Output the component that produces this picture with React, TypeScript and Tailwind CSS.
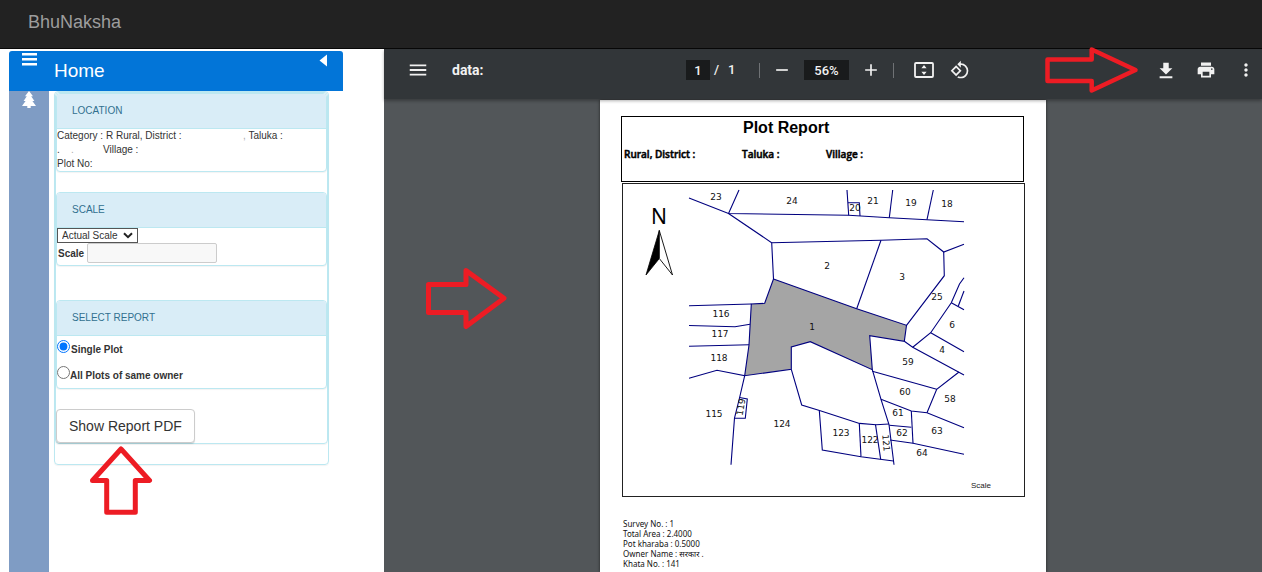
import type { ReactNode } from "react";
import {
  MdAdd,
  MdFileDownload,
  MdMenu,
  MdMoreVert,
  MdPrint,
  MdRemove,
  MdRotate90DegreesCcw,
} from "react-icons/md";

const boundaries = [
  "689,198 728.5,213.5 848.7,215.3 889.3,217.7 927,219.7 964,221.7",
  "739,190 728.5,213.5 771.7,242.7 773.5,279",
  "771.7,242.7 881,240.3 927,238.7 943.7,252 964,244.3",
  "943.7,252 944.3,275.7 906.5,325.3",
  "881,240.3 856.7,308.7",
  "847,190 848.7,215.3",
  "848,202.8 859.3,202.8 860,216",
  "892.7,190 889.3,217.7",
  "933.3,190 927,219.7",
  "964,277.7 959.5,284 951.3,302.7 930.7,332.7 912.7,347.3",
  "951.3,302.7 964,309.7",
  "964,291 958.3,306",
  "930.7,332.7 964,351.7",
  "904.3,341.3 912.7,347.3 964,375",
  "959,372 936.7,389.3 927,412.7",
  "872.3,371.3 936.7,389.3",
  "872.3,369.7 881,399.3 889,424.5 894,464.7",
  "881,399.3 911.3,411 927,412.7 964,427.7",
  "911.3,411 913,443.3",
  "889.3,425.3 911.3,427.3",
  "890,440 913,443.3 964,454.3",
  "889,424 876,424.7 859.5,423.4 819.5,410.5 801.7,405 791.3,369.3",
  "819.3,410.5 822.3,450 861,456.7 893.5,461",
  "859.3,423.5 861,456.7",
  "875.5,424.7 880.7,459.3",
  "689,305.7 751.3,304",
  "689,325.5 735,326.7 750,324.3",
  "689,346.3 749,344.8",
  "689,378.3 717,370.3 744.7,375.7 739.5,398 734.5,418 731,464.7",
  "739.5,397.5 747.3,399 745.3,418.3 734.5,418.3",
];

const plots: [string, number, number, number?][] = [
  ["23", 716, 197],
  ["24", 792, 201],
  ["20", 855, 208],
  ["21", 873, 201],
  ["19", 911, 203],
  ["18", 947, 204],
  ["2", 827, 266],
  ["3", 902, 277],
  ["25", 937, 297],
  ["6", 952, 325],
  ["4", 942, 350],
  ["59", 908, 362],
  ["1", 812, 327],
  ["116", 721, 314],
  ["117", 720, 334],
  ["118", 719, 358],
  ["115", 714, 414],
  ["119", 741, 407, -80],
  ["124", 782, 424],
  ["123", 841, 433],
  ["122", 870, 440],
  ["121", 886, 443, 85],
  ["60", 905, 392],
  ["58", 950, 399],
  ["61", 898, 413],
  ["62", 902, 433],
  ["63", 937, 431],
  ["64", 922, 453],
];

function PlotMap() {
  return (
    <svg viewBox="623 184 401 312" className="block w-full" role="img" aria-label="Plot map">
      <polygon
        points="773.5,279 856.7,308.7 906.5,325.3 904.3,341.3 869.7,335.7 872.3,369.7 810.3,341.7 791.3,347 791.3,369.3 744.7,375.7 749,345 751.3,304 764.7,303.3"
        fill="#a5a5a5"
        stroke="#00007f"
        strokeWidth="1.1"
      />
      <g fill="none" stroke="#00007f" strokeWidth="1.1">
        {boundaries.map((p) => (
          <polyline key={p} points={p} />
        ))}
      </g>
      <g className="font-['DejaVu_Sans',sans-serif] text-[9px]" fill="#111" textAnchor="middle">
        {plots.map(([label, x, y, turn]) => (
          <text key={label} x={x} y={y + 3} transform={turn ? `rotate(${turn} ${x} ${y})` : undefined}>
            {label}
          </text>
        ))}
      </g>
      <text x="659" y="224" textAnchor="middle" className="font-['Noto_Sans',sans-serif] text-[21px] font-normal">
        N
      </text>
      <path d="M659.3 230.5 L646 275 L659.3 258.5 Z" fill="#000" stroke="#000" strokeWidth="0.8" />
      <path d="M659.3 230.5 L672.5 275 L659.3 258.5 Z" fill="#fff" stroke="#000" strokeWidth="0.9" />
      <text x="971" y="488" fill="#222" className="font-['Liberation_Sans',sans-serif] text-[8px]">
        Scale
      </text>
    </svg>
  );
}

function Panel({ title, children }: { title: string; children: ReactNode }) {
  return (
    <section className="rounded-[4px] border border-[#bce8f1] bg-white shadow-[0_1px_1px_rgba(0,0,0,0.05)]">
      <h2 className="flex h-[35px] items-center rounded-t-[3px] border-b border-[#bce8f1] bg-[#d9edf7] pb-[2px] pl-[15px] text-[10px] text-[#31708f]">
        {title}
      </h2>
      {children}
    </section>
  );
}

function Sidebar() {
  return (
    <aside className="flex w-96 shrink-0 flex-col pt-[2px] pl-[9px] text-[10px] text-[#333]">
      <header className="flex h-10 w-[334px] rounded-t-[3px] bg-[#0275d8] text-white">
        <button aria-label="Toggle menu" className="flex w-10 justify-center pt-[2px]">
          <svg width="15" height="13" viewBox="0 0 15 13" fill="currentColor">
            <path d="M0 0h15v2.6H0zM0 5h15v2.6H0zM0 10h15v2.6H0z" />
          </svg>
        </button>
        <h1 className="grow pl-[5px] text-[19px] leading-10">Home</h1>
        <button aria-label="Collapse" className="flex w-10 justify-center pt-[3px]">
          <svg width="8" height="13" viewBox="0 0 8 13" fill="currentColor">
            <path d="M8 0.5v12L0.5 6.5z" />
          </svg>
        </button>
      </header>
      <div className="flex grow">
        <nav className="w-10 bg-[#7f9cc4] text-white">
          <a href="#layers" aria-label="Layers" className="flex justify-center">
            <svg width="14" height="17" viewBox="0 0 14 17" fill="currentColor">
              <path d="M7 0L11 5.2H9.2L12.4 10H10.4L14 15H8.7V17H5.3V15H0L3.6 10H1.6L4.8 5.2H3Z" />
            </svg>
          </a>
        </nav>
        <div className="w-[280px] pl-[5px]">
          <div className="rounded-[4px] border border-[#bce8f1] pb-[20px] shadow-[0_1px_1px_rgba(0,0,0,0.05)]">
            <form
              className="rounded-[4px] border border-[#bce8f1] shadow-[0_1px_1px_rgba(0,0,0,0.05)]"
              onSubmit={(e) => e.preventDefault()}
            >
              <Panel title="LOCATION">
                <div className="h-[42px] leading-[14px]">
                  <p className="flex">
                    <span className="w-[186px] whitespace-nowrap">Category : R Rural, District :</span>
                    <span>
                      <span className="text-[#aaa]">,</span> Taluka :
                    </span>
                  </p>
                  <p className="flex">
                    <span className="w-[14px]">.</span>
                    <span className="w-8 text-[#aaa]">.</span>
                    <span>Village :</span>
                  </p>
                  <p>Plot No:</p>
                </div>
              </Panel>
              <div className="mt-[20px]">
                <Panel title="SCALE">
                  <div className="flex h-[37px] flex-col items-start">
                    <div className="relative h-[15px]">
                      <select
                        aria-label="Scale type"
                        className="block h-[15px] w-[81px] appearance-none border border-[#555] bg-white pl-1 text-[10px] leading-[13px]"
                      >
                        <option>Actual Scale</option>
                      </select>
                      <svg
                        className="pointer-events-none absolute top-[4px] right-[5px]"
                        width="10"
                        height="7"
                        viewBox="0 0 10 7"
                        fill="none"
                        stroke="#222"
                        strokeWidth="2"
                      >
                        <path d="M1 1.2l4 4 4-4" />
                      </svg>
                    </div>
                    <div className="flex items-center">
                      <label htmlFor="scale" className="w-[30px] pl-px font-bold">
                        Scale
                      </label>
                      <input
                        id="scale"
                        disabled
                        className="h-5 w-[130px] rounded-[2px] border border-[#ccc] bg-[#f8f8f8] px-1"
                      />
                    </div>
                  </div>
                </Panel>
              </div>
              <div className="mt-[34px]">
                <Panel title="SELECT REPORT">
                  <div className="h-[52px] font-bold">
                    <div className="flex h-[26px]">
                      <input id="single" type="radio" name="report" defaultChecked className="mt-1 size-[13px]" />
                      <label htmlFor="single" className="pt-[6px] pl-px leading-[15px]">
                        Single Plot
                      </label>
                    </div>
                    <div className="flex h-[26px]">
                      <input id="all" type="radio" name="report" className="mt-1 size-[13px]" />
                      <label htmlFor="all" className="pt-[6px] leading-[15px]">
                        All Plots of same owner
                      </label>
                    </div>
                  </div>
                </Panel>
              </div>
              <div className="relative mt-[20px]">
                <button className="block h-[34px] rounded-[4px] border border-[#ccc] bg-white px-3 text-[14px] shadow-[0_1px_1px_rgba(0,0,0,0.15)]">
                  Show Report PDF
                </button>
                <svg
                  className="pointer-events-none absolute top-[36px] left-[34px]"
                  width="63"
                  height="70"
                  viewBox="90 445 63 70"
                  fill="none"
                  stroke="#ed1c24"
                  strokeWidth="5"
                  strokeLinejoin="round"
                  aria-hidden="true"
                >
                  <path d="M121 449L149.5 480.5H135.3V512.3H106.7V480.5H92.5Z" />
                </svg>
              </div>
            </form>
          </div>
        </div>
      </div>
    </aside>
  );
}

function Toolbar() {
  return (
    <div className="relative grid h-[50px] grid-cols-[1fr_auto_1fr] items-center bg-[#323639] pb-2 font-['Roboto',sans-serif] text-[#f1f1f1] shadow-[0_2px_3px_rgba(0,0,0,0.3)]">
      <div className="flex items-center gap-[23px] pl-[23px] text-[14px]">
        <button aria-label="Menu">
          <MdMenu size={22} />
        </button>
        <span className="font-bold">data:</span>
      </div>
      <div className="flex items-center pl-[10px] text-[13px] font-medium">
        <input
          aria-label="Page number"
          defaultValue="1"
          className="h-5 w-6 bg-[#191b1c] text-center"
        />
        <span className="w-[18px] pl-1">/</span>
        <span className="w-[31px]">1</span>
        <span className="h-[15px] w-px bg-[#6f7275]" />
        <button aria-label="Zoom out" className="ml-[12px]">
          <MdRemove size={20} />
        </button>
        <input
          aria-label="Zoom level"
          defaultValue="56%"
          className="ml-[12px] h-5 w-[45px] bg-[#191b1c] text-center"
        />
        <button aria-label="Zoom in" className="ml-[12px]">
          <MdAdd size={20} />
        </button>
        <span className="ml-[12px] h-[15px] w-px bg-[#6f7275]" />
        <button aria-label="Fit to page" className="ml-[20px]">
          <svg width="20" height="16" viewBox="0 0 20 16" fill="currentColor">
            <rect x="1" y="1" width="18" height="14" rx="1" fill="none" stroke="currentColor" strokeWidth="1.8" />
            <path d="M10 3l2.6 3.2H7.4zM10 13l2.6-3.2H7.4z" />
          </svg>
        </button>
        <button aria-label="Rotate" className="ml-4">
          <MdRotate90DegreesCcw size={20} />
        </button>
      </div>
      <div className="flex items-center justify-end pr-[6px]">
        <svg
          className="pointer-events-none absolute top-[-3px] right-[123px]"
          width="95"
          height="50"
          viewBox="1044 46 95 50"
          fill="none"
          stroke="#ed1c24"
          strokeWidth="4.5"
          strokeLinejoin="round"
          aria-hidden="true"
        >
          <path d="M1047.5 59.5H1091.7V49.5L1135.5 70L1091.7 90.5V81H1047.5Z" />
        </svg>
        <button aria-label="Download">
          <MdFileDownload size={20} viewBox="1 0 22 22" />
        </button>
        <button aria-label="Print" className="ml-5">
          <MdPrint size={20} />
        </button>
        <button aria-label="More" className="ml-5">
          <MdMoreVert size={20} />
        </button>
      </div>
    </div>
  );
}

function Report() {
  return (
    <article className="mx-auto mt-px w-[446px] grow bg-white px-[21px] pt-[16px] font-['Open_Sans','Noto_Sans',sans-serif] text-black shadow-[0_0_3px_rgba(0,0,0,0.6)]">
      <header className="h-[66px] w-[403px] border border-black">
        <h2 className="pl-[121px] font-['Liberation_Sans',sans-serif] text-[16px] leading-[22px] font-bold">
          Plot Report
        </h2>
        <p className="flex pt-[8px] pl-[2px] text-[10px] leading-[15px] font-semibold whitespace-nowrap [-webkit-text-stroke:0.5px_black]">
          <span className="w-[118px]">Rural, District :</span>
          <span className="w-[84px]">Taluka :</span>
          <span>Village :</span>
        </p>
      </header>
      <div className="mt-px ml-px w-[403px] border border-[#222]">
        <PlotMap />
      </div>
      <ul className="pt-[22px] pl-[2px] font-['Noto_Sans',sans-serif] text-[8px] leading-[10px] text-[#111]">
        <li>Survey No. : 1</li>
        <li>Total Area : 2.4000</li>
        <li>Pot kharaba : 0.5000</li>
        <li>Owner Name : सरकार .</li>
        <li>Khata No. : 141</li>
      </ul>
    </article>
  );
}

export default function App() {
  return (
    <div className="flex min-h-screen flex-col bg-white font-['Liberation_Sans',Arial,sans-serif]">
      <header className="flex h-[49px] items-center border-b border-[#080808] bg-[#222] pb-[3px] pl-7">
        <a href="#home" className="text-[18px] text-[#9d9d9d]">
          BhuNaksha
        </a>
      </header>
      <main className="flex grow">
        <Sidebar />
        <section className="relative flex grow flex-col bg-[#525659]">
          <Toolbar />
          <Report />
          <svg
            className="pointer-events-none absolute top-[218px] left-[41px]"
            width="84"
            height="64"
            viewBox="425 267 84 64"
            fill="none"
            stroke="#ed1c24"
            strokeWidth="5"
            strokeLinejoin="round"
            aria-hidden="true"
          >
            <path d="M428.5 284.5H466V270.5L504 298.3L466 326.5V312.5H428.5Z" />
          </svg>
        </section>
      </main>
    </div>
  );
}
